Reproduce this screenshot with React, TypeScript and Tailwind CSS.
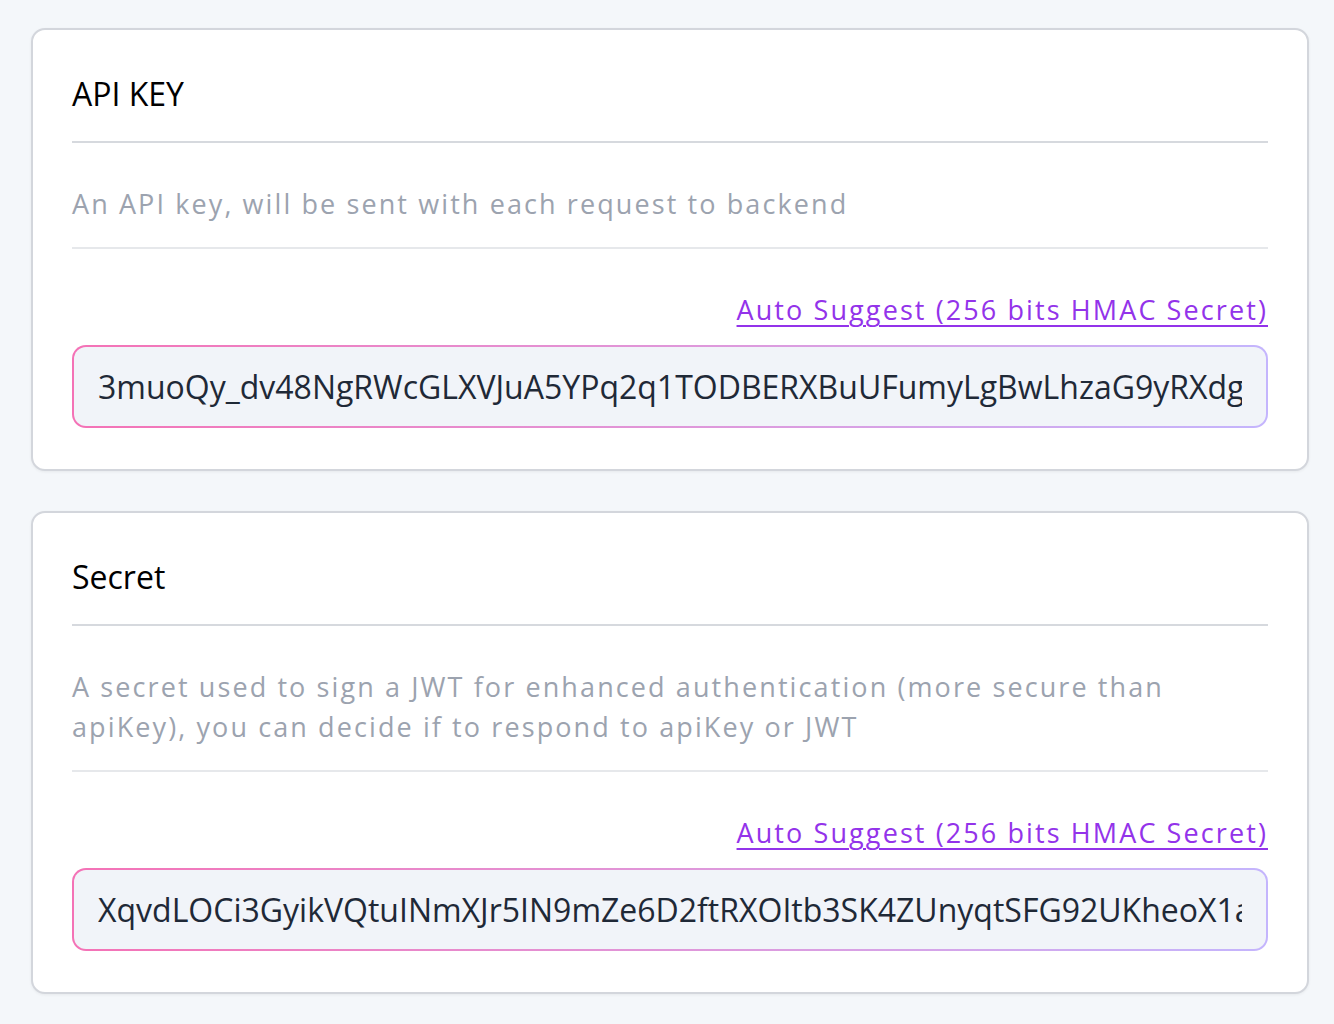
import React from "react";

interface KeyCardProps {
  title: string;
  description: string;
  value: string;
}

function KeyCard({ title, description, value }: KeyCardProps) {
  return (
    <div className="rounded-[14px] border-2 border-[#d3d6dc] bg-white px-[39px] pt-[42px] pb-[41px] shadow-[0_1px_3px_rgba(0,0,0,0.06)]">
      <h3 className="text-[32px] leading-[44px] text-black">{title}</h3>
      <div className="mt-[25px] h-[2px] bg-[#d6d9de]" />
      <p className="pt-[41px] pb-[23px] text-[27px] leading-[40px] tracking-[2.1px] text-[#9ca3af]">
        {description}
      </p>
      <div className="h-[2px] bg-[#e6e8eb]" />
      <div className="flex justify-end pt-[43px] pb-[17px]">
        <a
          href="#"
          className="text-[27px] leading-[36px] tracking-[2.1px] text-[#9333ea] underline underline-offset-[5px] decoration-[2px]"
        >
          Auto Suggest (256 bits HMAC Secret)
        </a>
      </div>
      <div className="rounded-[14px] bg-gradient-to-r from-[#f472b6] to-[#c4b5fd] p-[2px]">
        <input
          readOnly
          value={value}
          className="block h-[79px] w-full rounded-[12px] bg-[#f1f4f9] px-[24px] text-[32px] text-[#1f2937] outline-none"
        />
      </div>
    </div>
  );
}

export default function App() {
  return (
    <div
      className="min-h-screen bg-[#f4f7fa] px-[31px] pt-[28px] pb-[30px]"
      style={{ fontFamily: '"Open Sans", "Noto Sans", sans-serif' }}
    >
      <div className="flex flex-col gap-[40px] w-[1278px]">
        <KeyCard
          title="API KEY"
          description="An API key, will be sent with each request to backend"
          value="3muoQy_dv48NgRWcGLXVJuA5YPq2q1TODBERXBuUFumyLgBwLhzaG9yRXdg"
        />
        <KeyCard
          title="Secret"
          description="A secret used to sign a JWT for enhanced authentication (more secure than apiKey), you can decide if to respond to apiKey or JWT"
          value="XqvdLOCi3GyikVQtuINmXJr5IN9mZe6D2ftRXOItb3SK4ZUnyqtSFG92UKheoX1aQm7WzP"
        />
      </div>
    </div>
  );
}
